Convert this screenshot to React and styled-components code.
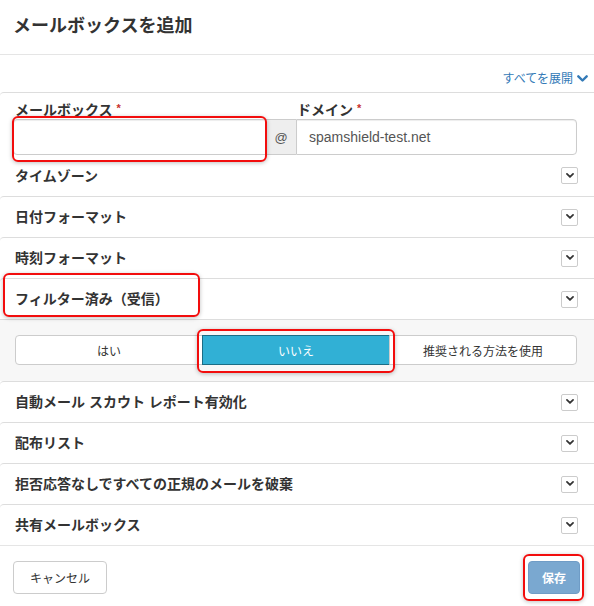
import React from "react";
import styled, { createGlobalStyle } from "styled-components";

const GlobalStyle = createGlobalStyle`
  html, body { margin: 0; padding: 0; background: #fff; }
  body {
    font-family: "Liberation Sans", "Noto Sans CJK JP", sans-serif;
    color: #333;
  }
  * { box-sizing: border-box; }
`;

const Page = styled.div`
  position: relative;
  width: 594px;
  height: 606px;
  overflow: hidden;
`;

const Header = styled.header`
  height: 55px;
  display: flex;
  align-items: center;
  padding: 0 13px 2px;
  border-bottom: 1px solid #e5e5e5;

  h1 {
    margin: 0;
    font-size: 18px;
    font-weight: 700;
    line-height: 24px;
    color: #333;
  }
`;

const Toolbar = styled.div`
  height: 37px;
  display: flex;
  justify-content: flex-end;
  align-items: flex-end;
  padding: 0 6px 5px;
`;

const ExpandLink = styled.a`
  display: flex;
  align-items: center;
  gap: 4px;
  font-size: 12px;
  line-height: 16px;
  color: #337ab7;
  text-decoration: none;
  cursor: pointer;
`;

const Panel = styled.section`
  border-top: 1px solid #ddd;
  border-top-left-radius: 4px;
`;

const FieldGrid = styled.div`
  display: grid;
  grid-template-columns: 253px 30px 1fr;
  padding: 6px 17px 0 13px;
`;

const Label = styled.label`
  font-size: 14px;
  font-weight: 700;
  line-height: 18px;
  height: 20px;
  padding-left: ${p => p.$indent || 0}px;
  grid-column: ${p => p.$col};

  em {
    font-style: normal;
    color: #c9302c;
    font-size: 11px;
    margin-left: 4px;
    vertical-align: 3px;
  }
`;

const TextInput = styled.input`
  height: 36px;
  border: 1px solid #ccc;
  border-radius: ${p => (p.$side === "left" ? "4px 0 0 4px" : "0 4px 4px 0")};
  box-shadow: inset 0 1px 1px rgba(0, 0, 0, 0.075);
  padding: 6px 12px;
  font-family: inherit;
  font-size: 14px;
  color: #555;
  outline: none;
  min-width: 0;
  width: 100%;
`;

const Addon = styled.span`
  height: 36px;
  display: flex;
  align-items: center;
  justify-content: center;
  background: #eee;
  border-top: 1px solid #ccc;
  border-bottom: 1px solid #ccc;
  font-size: 13px;
  color: #555;
`;

const Row = styled.div`
  display: flex;
  align-items: center;
  justify-content: space-between;
  height: ${p => (p.$plain ? 41 : 41)}px;
  padding: 0 16px 0 15px;
  border-top: ${p => (p.$plain ? "none" : "1px solid #ddd")};
  border-top-left-radius: 4px;
  font-size: 14px;
  font-weight: 700;
  line-height: 18px;
  color: #333;
`;

const Toggle = styled.span`
  width: 17px;
  height: 17px;
  display: flex;
  align-items: center;
  justify-content: center;
  border: 1px solid #ccc;
  border-radius: 2px;
  background: #fff;
`;

const CollapseBody = styled.div`
  border-top: 1px solid #ddd;
  background: #f7f7f7;
  padding: 15px 17px 16px 15px;
`;

const ButtonGroup = styled.div`
  display: flex;
  height: 30px;
`;

const GroupButton = styled.button`
  flex: 1;
  height: 30px;
  font-family: inherit;
  font-size: 12px;
  border: 1px solid ${p => (p.$active ? "#1b6d85" : "#ccc")};
  background: ${p => (p.$active ? "#31b0d5" : "#fff")};
  color: ${p => (p.$active ? "#fff" : "#333")};
  margin-left: -1px;
  cursor: pointer;

  &:first-child {
    margin-left: 0;
    border-radius: 4px 0 0 4px;
  }
  &:last-child {
    border-radius: 0 4px 4px 0;
  }
`;

const Footer = styled.footer`
  border-top: 1px solid #e5e5e5;
  display: flex;
  justify-content: space-between;
  padding: 15px 14px 0 13px;
`;

const Button = styled.button`
  height: 33px;
  padding: 0 ${p => (p.$primary ? 13 : 16)}px;
  font-family: inherit;
  font-size: 12px;
  font-weight: ${p => (p.$primary ? 700 : 400)};
  border-radius: 4px;
  border: 1px solid ${p => (p.$primary ? "#6f9cc6" : "#ccc")};
  background: ${p => (p.$primary ? "#7aa8d0" : "#fff")};
  color: ${p => (p.$primary ? "#fff" : "#333")};
  cursor: pointer;
`;

const Mark = styled.div`
  position: absolute;
  left: ${p => p.$x}px;
  top: ${p => p.$y}px;
  width: ${p => p.$w}px;
  height: ${p => p.$h}px;
  border: 2px solid #f20d0d;
  border-radius: 6px;
  box-shadow: 0 1px 4px rgba(0, 0, 0, 0.25);
  pointer-events: none;
`;

const Chevron = ({ color = "#333", size = 8 }) => (
  <svg width={size} height={size * 0.65} viewBox="0 0 10 6.5">
    <polyline
      points="1.2,1.2 5,5 8.8,1.2"
      fill="none"
      stroke={color}
      strokeWidth="2.2"
      strokeLinecap="round"
      strokeLinejoin="round"
    />
  </svg>
);

const Section = ({ title, plain }) => (
  <Row $plain={plain}>
    <span>{title}</span>
    <Toggle>
      <Chevron />
    </Toggle>
  </Row>
);

const topRows = ["日付フォーマット", "時刻フォーマット", "フィルター済み（受信）"];
const bottomRows = [
  "自動メール スカウト レポート有効化",
  "配布リスト",
  "拒否応答なしですべての正規のメールを破棄",
  "共有メールボックス",
];
const choices = ["はい", "いいえ", "推奨される方法を使用"];

export default function App() {
  return (
    <Page>
      <GlobalStyle />
      <Header>
        <h1>メールボックスを追加</h1>
      </Header>
      <Toolbar>
        <ExpandLink>
          すべてを展開
          <Chevron color="#337ab7" size={11} />
        </ExpandLink>
      </Toolbar>

      <Panel>
        <FieldGrid>
          <Label $col="1 / 2" $indent={2}>
            メールボックス<em>*</em>
          </Label>
          <Label $col="3 / 4" $indent={1}>
            ドメイン<em>*</em>
          </Label>
          <TextInput $side="left" />
          <Addon>@</Addon>
          <TextInput $side="right" defaultValue="spamshield-test.net" />
        </FieldGrid>
        <Section title="タイムゾーン" plain />
      </Panel>

      {topRows.map(t => (
        <Section key={t} title={t} />
      ))}
      <CollapseBody>
        <ButtonGroup>
          {choices.map(c => (
            <GroupButton key={c} $active={c === "いいえ"}>
              {c}
            </GroupButton>
          ))}
        </ButtonGroup>
      </CollapseBody>
      {bottomRows.map(t => (
        <Section key={t} title={t} />
      ))}

      <Footer>
        <Button>キャンセル</Button>
        <Button $primary>保存</Button>
      </Footer>

      <Mark $x={12} $y={116} $w={255} $h={46} />
      <Mark $x={3} $y={273} $w={197} $h={44} />
      <Mark $x={197} $y={329} $w={198} $h={44} />
      <Mark $x={523} $y={554} $w={61} $h={47} />
    </Page>
  );
}
